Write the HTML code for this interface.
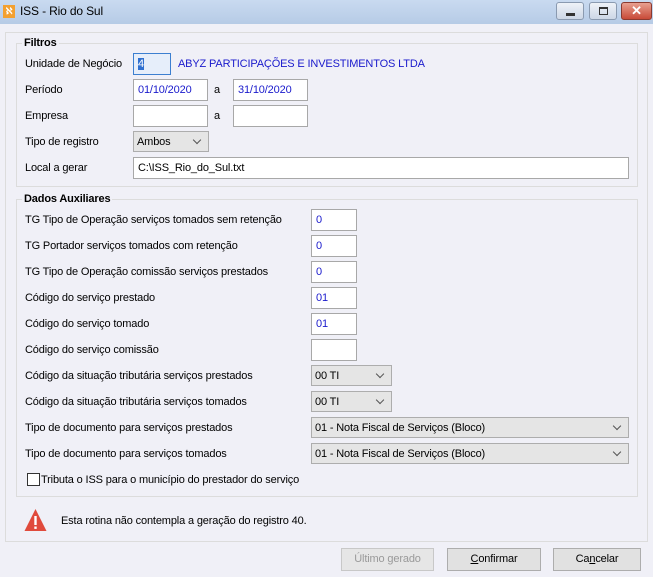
<!DOCTYPE html>
<html><head><meta charset="utf-8"><style>
*{box-sizing:border-box;margin:0;padding:0}
body{width:653px;height:577px;background:#f0f0f7;font-family:"Liberation Sans",sans-serif;font-size:11px;letter-spacing:-0.15px;color:#000;position:relative;overflow:hidden}
.a{position:absolute;white-space:nowrap}
.t{position:absolute;white-space:nowrap;line-height:14px}
.in{position:absolute;background:#fff;border:1px solid #a8a8a8;height:22px;padding:4px 0 0 4px;color:#1a1acc}
.sel{position:absolute;background:#e5e5e5;border:1px solid #adadad;height:21px;padding:4px 0 0 3px}
.sel:after{content:"";position:absolute;right:8px;top:5px;width:5px;height:5px;border-right:1px solid #555;border-bottom:1px solid #555;transform:rotate(45deg)}
.grp{position:absolute;border:1px solid #dcdcdc}
.gl{position:absolute;font-weight:bold;background:#f0f0f7;padding:0 2px;font-size:11px}
.btn{position:absolute;background:#e1e1e1;border:1px solid #adadad;height:23px;text-align:center;padding-top:4px}
</style></head><body>
<div class="a" style="left:0;top:0;width:653px;height:24px;background:linear-gradient(#c9daf0,#b6cbe6)"></div>
<div class="a" style="left:3px;top:5px;width:12px;height:13px;background:#f3a030;color:#fff;font-size:9px;font-weight:bold;text-align:center;line-height:13px">ℵ</div>
<div class="t" style="left:20px;top:4px;font-size:12px">ISS - Rio do Sul</div>
<div class="a" style="left:556px;top:2px;width:28px;height:18px;border:1px solid #8a9ab0;border-radius:3px;background:linear-gradient(#eef2f8,#cdd7e6)"><div class="a" style="left:9px;top:10px;width:9px;height:3px;background:#333"></div></div>
<div class="a" style="left:589px;top:2px;width:28px;height:18px;border:1px solid #8a9ab0;border-radius:3px;background:linear-gradient(#eef2f8,#cdd7e6)"><div class="a" style="left:9px;top:4px;width:9px;height:8px;border:1px solid #333;border-top-width:2px"></div></div>
<div class="a" style="left:621px;top:2px;width:31px;height:18px;border:1px solid #8a3a30;border-radius:3px;background:linear-gradient(#e8a090,#c84a38);color:#fff;font-weight:bold;text-align:center;font-size:13px;line-height:16px">✕</div>

<div class="a" style="left:5px;top:32px;width:643px;height:510px;border:1px solid #dcdcdc"></div>
<div class="grp" style="left:16px;top:43px;width:622px;height:144px"></div>
<div class="gl" style="left:22px;top:37px">Filtros</div>
<div class="t" style="left:25px;top:57px">Unidade de Negócio</div>
<div class="in" style="left:133px;top:53px;width:38px;background:#e6eefa;border-color:#3c7fd0;color:#000"><span style="background:#3070d0;color:#fff">4</span></div>
<div class="t" style="left:178px;top:57px;color:#1a1acc">ABYZ PARTICIPAÇÕES E INVESTIMENTOS LTDA</div>
<div class="t" style="left:25px;top:83px">Período</div>
<div class="in" style="left:133px;top:79px;width:75px">01/10/2020</div>
<div class="t" style="left:214px;top:83px">a</div>
<div class="in" style="left:233px;top:79px;width:75px">31/10/2020</div>
<div class="t" style="left:25px;top:109px">Empresa</div>
<div class="in" style="left:133px;top:105px;width:75px"></div>
<div class="t" style="left:214px;top:109px">a</div>
<div class="in" style="left:233px;top:105px;width:75px"></div>
<div class="t" style="left:25px;top:135px">Tipo de registro</div>
<div class="sel" style="left:133px;top:131px;width:76px">Ambos</div>
<div class="t" style="left:25px;top:161px">Local a gerar</div>
<div class="in" style="left:133px;top:157px;width:496px;color:#000">C:\ISS_Rio_do_Sul.txt</div>

<div class="grp" style="left:16px;top:199px;width:622px;height:298px"></div>
<div class="gl" style="left:22px;top:193px">Dados Auxiliares</div>
<div class="t" style="left:25px;top:213px">TG Tipo de Operação serviços tomados sem retenção</div>
<div class="in" style="left:311px;top:209px;width:46px">0</div>
<div class="t" style="left:25px;top:239px">TG Portador serviços tomados com retenção</div>
<div class="in" style="left:311px;top:235px;width:46px">0</div>
<div class="t" style="left:25px;top:265px">TG Tipo de Operação comissão serviços prestados</div>
<div class="in" style="left:311px;top:261px;width:46px">0</div>
<div class="t" style="left:25px;top:291px">Código do serviço prestado</div>
<div class="in" style="left:311px;top:287px;width:46px">01</div>
<div class="t" style="left:25px;top:317px">Código do serviço tomado</div>
<div class="in" style="left:311px;top:313px;width:46px">01</div>
<div class="t" style="left:25px;top:343px">Código do serviço comissão</div>
<div class="in" style="left:311px;top:339px;width:46px"></div>
<div class="t" style="left:25px;top:369px">Código da situação tributária serviços prestados</div>
<div class="sel" style="left:311px;top:365px;width:81px">00 TI</div>
<div class="t" style="left:25px;top:395px">Código da situação tributária serviços tomados</div>
<div class="sel" style="left:311px;top:391px;width:81px">00 TI</div>
<div class="t" style="left:25px;top:421px">Tipo de documento para serviços prestados</div>
<div class="sel" style="left:311px;top:417px;width:318px">01 - Nota Fiscal de Serviços (Bloco)</div>
<div class="t" style="left:25px;top:447px">Tipo de documento para serviços tomados</div>
<div class="sel" style="left:311px;top:443px;width:318px">01 - Nota Fiscal de Serviços (Bloco)</div>
<div class="a" style="left:27px;top:473px;width:13px;height:13px;border:1px solid #333;background:#fff"></div>
<div class="t" style="left:41px;top:473px">Tributa o ISS para o município do prestador do serviço</div>

<svg class="a" style="left:24px;top:508px" width="23" height="24" viewBox="0 0 23 24"><path d="M11.5 1 L22.5 23 L0.5 23 Z" fill="#e04a3c"/><rect x="10.3" y="8" width="2.4" height="9" fill="#fff"/><rect x="10.3" y="18.5" width="2.4" height="2.4" fill="#fff"/></svg>
<div class="t" style="left:61px;top:514px">Esta rotina não contempla a geração do registro 40.</div>

<div class="btn" style="left:341px;top:548px;width:93px;color:#9a9a9a;background:#e6e6e6;border-color:#c8c8c8">Último gerado</div>
<div class="btn" style="left:447px;top:548px;width:94px"><u>C</u>onfirmar</div>
<div class="btn" style="left:553px;top:548px;width:88px">Ca<u>n</u>celar</div>
</body></html>
